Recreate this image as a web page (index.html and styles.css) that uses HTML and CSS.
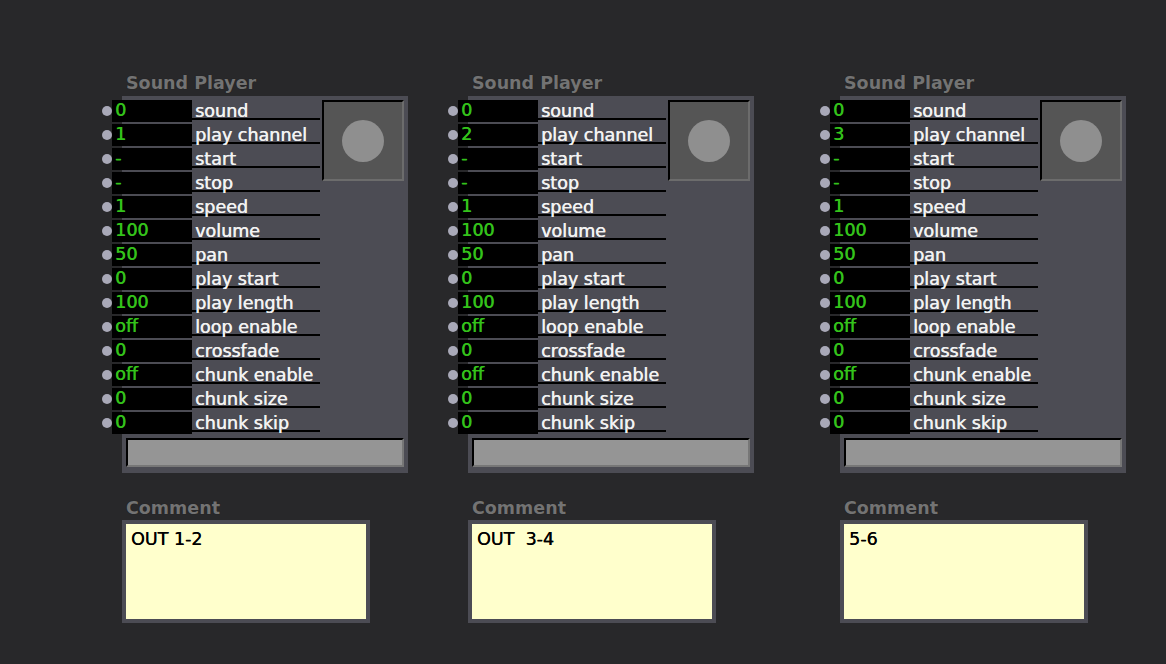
FILE: index.html
```html
<!DOCTYPE html>
<html lang="en">
<head>
    <meta charset="UTF-8">
    <title>Sound Player</title>
    <link rel="stylesheet" href="styles.css">
</head>
<body>
    <div class="stage">
        <div class="module">
            <div class="title">Sound Player</div>
            <div class="panel">
                <div class="top">
                    <div class="rows">
                        <div class="row"><span class="dot"></span><span class="value">0</span><span class="label">sound</span></div>
                        <div class="row"><span class="dot"></span><span class="value">1</span><span class="label">play channel</span></div>
                        <div class="row"><span class="dot"></span><span class="value">-</span><span class="label">start</span></div>
                        <div class="row"><span class="dot"></span><span class="value">-</span><span class="label">stop</span></div>
                        <div class="row"><span class="dot"></span><span class="value">1</span><span class="label">speed</span></div>
                        <div class="row"><span class="dot"></span><span class="value">100</span><span class="label">volume</span></div>
                        <div class="row"><span class="dot"></span><span class="value">50</span><span class="label">pan</span></div>
                        <div class="row"><span class="dot"></span><span class="value">0</span><span class="label">play start</span></div>
                        <div class="row"><span class="dot"></span><span class="value">100</span><span class="label">play length</span></div>
                        <div class="row"><span class="dot"></span><span class="value">off</span><span class="label">loop enable</span></div>
                        <div class="row"><span class="dot"></span><span class="value">0</span><span class="label">crossfade</span></div>
                        <div class="row"><span class="dot"></span><span class="value">off</span><span class="label">chunk enable</span></div>
                        <div class="row"><span class="dot"></span><span class="value">0</span><span class="label">chunk size</span></div>
                        <div class="row"><span class="dot"></span><span class="value">0</span><span class="label">chunk skip</span></div>
                    </div>
                    <div class="pad"><span class="knob"></span></div>
                </div>
                <div class="bar"></div>
            </div>
            <div class="title comment-title">Comment</div>
            <div class="comment">OUT 1-2</div>
        </div>

        <div class="module second">
            <div class="title">Sound Player</div>
            <div class="panel">
                <div class="top">
                    <div class="rows">
                        <div class="row"><span class="dot"></span><span class="value">0</span><span class="label">sound</span></div>
                        <div class="row"><span class="dot"></span><span class="value">2</span><span class="label">play channel</span></div>
                        <div class="row"><span class="dot"></span><span class="value">-</span><span class="label">start</span></div>
                        <div class="row"><span class="dot"></span><span class="value">-</span><span class="label">stop</span></div>
                        <div class="row"><span class="dot"></span><span class="value">1</span><span class="label">speed</span></div>
                        <div class="row"><span class="dot"></span><span class="value">100</span><span class="label">volume</span></div>
                        <div class="row"><span class="dot"></span><span class="value">50</span><span class="label">pan</span></div>
                        <div class="row"><span class="dot"></span><span class="value">0</span><span class="label">play start</span></div>
                        <div class="row"><span class="dot"></span><span class="value">100</span><span class="label">play length</span></div>
                        <div class="row"><span class="dot"></span><span class="value">off</span><span class="label">loop enable</span></div>
                        <div class="row"><span class="dot"></span><span class="value">0</span><span class="label">crossfade</span></div>
                        <div class="row"><span class="dot"></span><span class="value">off</span><span class="label">chunk enable</span></div>
                        <div class="row"><span class="dot"></span><span class="value">0</span><span class="label">chunk size</span></div>
                        <div class="row"><span class="dot"></span><span class="value">0</span><span class="label">chunk skip</span></div>
                    </div>
                    <div class="pad"><span class="knob"></span></div>
                </div>
                <div class="bar"></div>
            </div>
            <div class="title comment-title">Comment</div>
            <div class="comment">OUT  3-4</div>
        </div>

        <div class="module third">
            <div class="title">Sound Player</div>
            <div class="panel">
                <div class="top">
                    <div class="rows">
                        <div class="row"><span class="dot"></span><span class="value">0</span><span class="label">sound</span></div>
                        <div class="row"><span class="dot"></span><span class="value">3</span><span class="label">play channel</span></div>
                        <div class="row"><span class="dot"></span><span class="value">-</span><span class="label">start</span></div>
                        <div class="row"><span class="dot"></span><span class="value">-</span><span class="label">stop</span></div>
                        <div class="row"><span class="dot"></span><span class="value">1</span><span class="label">speed</span></div>
                        <div class="row"><span class="dot"></span><span class="value">100</span><span class="label">volume</span></div>
                        <div class="row"><span class="dot"></span><span class="value">50</span><span class="label">pan</span></div>
                        <div class="row"><span class="dot"></span><span class="value">0</span><span class="label">play start</span></div>
                        <div class="row"><span class="dot"></span><span class="value">100</span><span class="label">play length</span></div>
                        <div class="row"><span class="dot"></span><span class="value">off</span><span class="label">loop enable</span></div>
                        <div class="row"><span class="dot"></span><span class="value">0</span><span class="label">crossfade</span></div>
                        <div class="row"><span class="dot"></span><span class="value">off</span><span class="label">chunk enable</span></div>
                        <div class="row"><span class="dot"></span><span class="value">0</span><span class="label">chunk size</span></div>
                        <div class="row"><span class="dot"></span><span class="value">0</span><span class="label">chunk skip</span></div>
                    </div>
                    <div class="pad"><span class="knob"></span></div>
                </div>
                <div class="bar"></div>
            </div>
            <div class="title comment-title">Comment</div>
            <div class="comment">5-6</div>
        </div>
    </div>
</body>
</html>
```

FILE: styles.css
```css
body {
    margin: 0;
    padding: 0;
    background-color: #28282a;
    font-family: 'DejaVu Sans', Verdana, sans-serif;
    font-size: 17.5px;
    height: 664px;
    overflow: hidden;
}

.stage {
    display: flex;
    align-items: flex-start;
    padding: 73px 0 0 102px;
}

.module {
    width: 306px;
}

.module.second {
    margin-left: 40px;
}

.module.third {
    margin-left: 66px;
}

.title {
    padding-left: 24px;
    height: 20px;
    line-height: 20px;
    margin-bottom: 3px;
    font-weight: bold;
    color: #737373;
    text-shadow: 0 0 1px rgba(0, 0, 0, 0.4);
}

.panel {
    margin-left: 20px;
    width: 286px;
    box-sizing: border-box;
    padding: 4px 4px 6px 0;
    background-color: #4c4c54;
}

.top {
    display: flex;
    align-items: flex-start;
}

.rows {
    margin-left: -20px;
    width: 218px;
}

.row {
    display: flex;
    align-items: flex-start;
    height: 22px;
    margin-bottom: 2px;
}

.row:last-child {
    margin-bottom: 0;
}

.dot {
    flex: none;
    width: 10px;
    height: 10px;
    margin-top: 6px;
    border-radius: 50%;
    background-color: #a9a9b8;
    position: relative;
    z-index: 1;
}

.value {
    flex: none;
    width: 80px;
    height: 22px;
    box-sizing: border-box;
    padding-left: 3px;
    line-height: 20px;
    background-color: #000;
    color: #34c21b;
    text-shadow: 0.5px 0 0 #34c21b;
}

.label {
    flex: none;
    width: 128px;
    height: 20px;
    box-sizing: border-box;
    padding-left: 3px;
    line-height: 22px;
    border-bottom: 2px solid #000;
    color: #f2f2f2;
    text-shadow: 0.5px 0 0 #f2f2f2;
    white-space: nowrap;
}

.pad {
    flex: none;
    width: 82px;
    height: 81px;
    margin-left: 2px;
    box-sizing: border-box;
    border: 2px solid;
    border-color: #000 #6c6c6c #6c6c6c #000;
    background-color: #555555;
    display: flex;
    justify-content: center;
    align-items: center;
}

.knob {
    width: 42px;
    height: 42px;
    border-radius: 50%;
    background-color: #8f8f8f;
}

.bar {
    margin: 4px 0 0 4px;
    height: 29px;
    box-sizing: border-box;
    border: 2px solid;
    border-color: #000 #777 #777 #000;
    background-color: #959595;
}

.comment-title {
    margin-top: 25px;
    margin-bottom: 2px;
}

.comment {
    margin-left: 20px;
    width: 248px;
    height: 103px;
    box-sizing: border-box;
    border: 4px solid #4c4c54;
    background-color: #ffffcc;
    padding: 5px 5px;
    line-height: 20px;
    color: #000;
    text-shadow: 0.3px 0 0 #000;
    white-space: pre;
}
```
